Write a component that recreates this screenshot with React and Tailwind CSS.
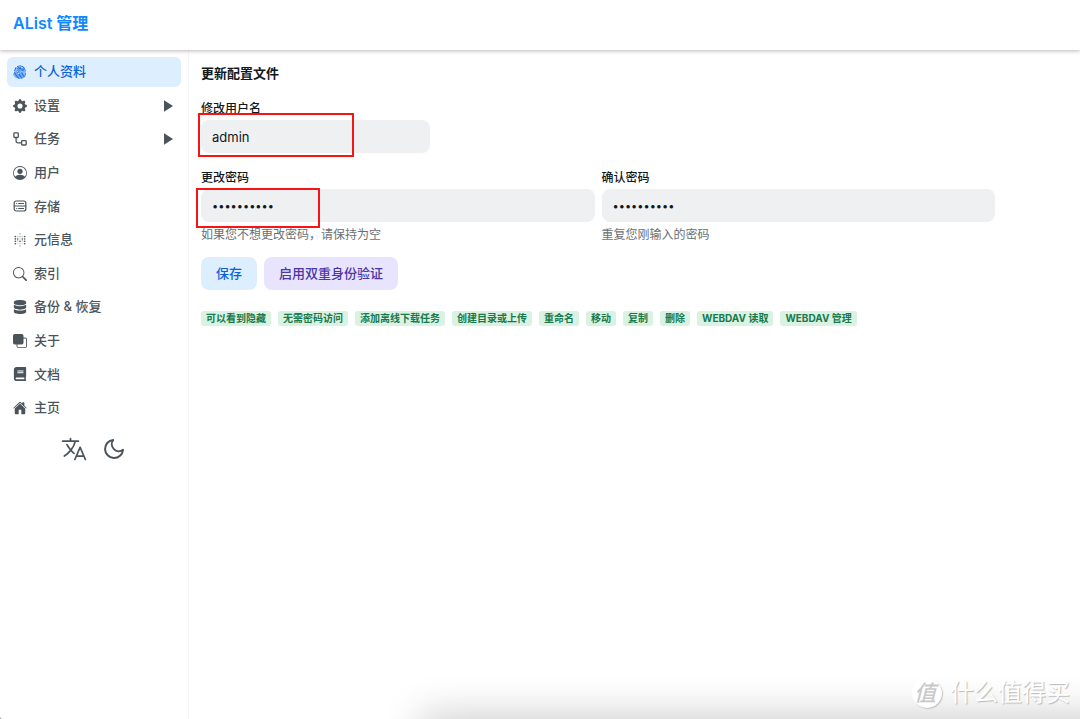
import { BsFingerprint, BsGearFill, BsPersonCircle, BsSearch, BsFront } from "react-icons/bs";
import { SiMetabase } from "react-icons/si";
import { FaDatabase, FaBook } from "react-icons/fa";
import { IoHome, IoLanguageOutline } from "react-icons/io5";
import { FiMoon } from "react-icons/fi";

function WorkflowIcon(props) {
  return (
    <svg viewBox="0 0 14 14" fill="none" stroke="currentColor" strokeWidth="1.3" {...props}>
      <rect x="0.9" y="0.9" width="4.4" height="4.6" rx="0.8" />
      <rect x="8.6" y="8.6" width="4.6" height="4.4" rx="0.8" />
      <path d="M3.1 5.5v3.6a1.8 1.8 0 0 0 1.8 1.8h3.7" />
    </svg>
  );
}

function StorageIcon(props) {
  return (
    <svg viewBox="0 0 14 14" fill="none" stroke="currentColor" strokeWidth="1.2" strokeLinecap="round" {...props}>
      <rect x="1.2" y="2" width="11.6" height="10" rx="2" />
      <path d="M1.2 7h11.6" />
      <path d="M3.6 4.5h.2M5.6 4.5h5M3.6 9.5h.2M5.6 9.5h5" strokeWidth="1" />
    </svg>
  );
}

const menu = [
  { label: "个人资料", icon: BsFingerprint, active: true },
  { label: "设置", icon: BsGearFill, expandable: true },
  { label: "任务", icon: WorkflowIcon, expandable: true },
  { label: "用户", icon: BsPersonCircle },
  { label: "存储", icon: StorageIcon },
  { label: "元信息", icon: SiMetabase },
  { label: "索引", icon: BsSearch },
  { label: "备份 & 恢复", icon: FaDatabase },
  { label: "关于", icon: BsFront },
  { label: "文档", icon: FaBook },
  { label: "主页", icon: IoHome },
];

const permissions = [
  "可以看到隐藏",
  "无需密码访问",
  "添加离线下载任务",
  "创建目录或上传",
  "重命名",
  "移动",
  "复制",
  "删除",
  "WEBDAV 读取",
  "WEBDAV 管理",
];

function MenuItem({ label, icon: Icon, active, expandable }) {
  const tone = active ? "bg-[#ddeeff] text-[#0b62d6]" : "text-[#4b545b]";
  const row = `flex h-[30px] w-full items-center gap-[7px] rounded-md pl-[6px] pr-2 text-[13px] font-medium ${tone}`;
  const content = (
    <>
      <Icon className="size-[14px] shrink-0" aria-hidden="true" />
      <span>{label}</span>
    </>
  );
  if (expandable) {
    return (
      <button type="button" className={row} aria-expanded="false">
        {content}
        <svg viewBox="0 0 9 12" className="ml-auto h-3 w-[9px]" fill="currentColor" aria-hidden="true">
          <path d="M0 .3v11.4L9 6z" />
        </svg>
      </button>
    );
  }
  return (
    <a href="#" className={row} aria-current={active ? "page" : undefined}>
      {content}
    </a>
  );
}

function Field({ id, label, type = "text", value, help, mark }) {
  const size = type === "password" ? "text-[11px]" : "text-[13px]";
  return (
    <div className="relative flex flex-col">
      <label htmlFor={id} className="mb-[2px] text-xs/[18px] font-medium text-[#11181c]">
        {label}
      </label>
      <input
        id={id}
        type={type}
        defaultValue={value}
        className={`h-[33px] w-full rounded-lg bg-[#eff0f2] px-[11px] text-[#11181c] outline-none ${size}`}
      />
      {help && <p className="mt-1 text-xs/[18px] text-[#687076]">{help}</p>}
      {mark}
    </div>
  );
}

export default function App() {
  return (
    <div className="relative flex min-h-screen flex-col overflow-hidden bg-white font-['Inter','Noto_Sans_CJK_SC',sans-serif]">
      <header className="z-10 flex h-[50px] items-center bg-white px-[13px] pb-1 shadow-[0_1px_4px_rgba(0,0,0,0.28)]">
        <h1 className="text-base font-semibold text-[#1088ff]">AList 管理</h1>
      </header>

      <div className="flex flex-1">
        <aside className="w-[189px] shrink-0 border-r border-[#f6f6f6] px-[7px] pt-[7px]">
          <nav>
            <ul className="flex h-[366px] flex-col justify-between">
              {menu.map((item) => (
                <li key={item.label}>
                  <MenuItem {...item} />
                </li>
              ))}
            </ul>
          </nav>
          <div className="mt-3 flex items-center justify-center gap-[14px] pr-[2px] text-[#4b545b]">
            <button type="button" aria-label="语言">
              <IoLanguageOutline className="size-7" />
            </button>
            <button type="button" aria-label="深色模式">
              <FiMoon className="size-6" />
            </button>
          </div>
        </aside>

        <main className="min-w-0 flex-1 px-3 pt-[13px]">
          <h2 className="text-[13px]/5 font-bold text-[#11181c]">更新配置文件</h2>
          <div className="mt-[17px] w-[229px]">
            <Field
              id="username"
              label="修改用户名"
              value="admin"
              mark={<div className="pointer-events-none absolute top-[13px] -left-[3px] h-11 w-[156px] border-2 border-[#f81414]" />}
            />
          </div>
          <div className="mt-4 grid max-w-[794px] grid-cols-2 gap-[7px]">
            <Field
              id="password"
              label="更改密码"
              type="password"
              value="adminadmin"
              help="如果您不想更改密码，请保持为空"
              mark={<div className="pointer-events-none absolute top-[19px] -left-[5px] h-10 w-[124px] border-2 border-[#f81414]" />}
            />
            <Field id="confirm" label="确认密码" type="password" value="adminadmin" help="重复您刚输入的密码" />
          </div>
          <div className="mt-[13px] flex gap-[7px]">
            <button type="button" className="h-[33px] rounded-lg bg-[#ddeeff] px-[15px] text-[13px] font-medium text-[#0b62d6]">
              保存
            </button>
            <button type="button" className="h-[33px] rounded-lg bg-[#e9e4fd] px-[15px] text-[13px] font-medium text-[#4b35a8]">
              启用双重身份验证
            </button>
          </div>
          <ul className="mt-[21px] flex flex-wrap gap-[7px]">
            {permissions.map((name) => (
              <li key={name} className="rounded-[3px] bg-[#d9f2e1] px-[5px] text-[10px]/[15px] font-bold text-[#18794e]">
                {name}
              </li>
            ))}
          </ul>
        </main>
      </div>

      <div className="pointer-events-none absolute bottom-0 left-0 size-1 bg-[radial-gradient(circle_at_top_right,transparent_4px,#a8a8a8_5px)]" />
      <div className="pointer-events-none absolute right-0 bottom-0 left-[340px] h-16 overflow-hidden">
        <div className="absolute top-full -right-20 left-[84px] h-20 shadow-[0_0_40px_4px_rgba(0,0,0,0.2)]" />
      </div>
      <div className="pointer-events-none absolute right-[10px] bottom-[9px] flex items-center gap-2">
        <span className="flex size-[30px] items-center justify-center rounded-full bg-white pr-1 text-[22px]/[30px] font-medium text-[#c9c9c9] italic shadow-[1px_1px_1px_#c4c4c4]">
          值
        </span>
        <span className="text-2xl/[34px] text-white [text-shadow:1px_1px_1px_#b8b8b8]">什么值得买</span>
      </div>
    </div>
  );
}
